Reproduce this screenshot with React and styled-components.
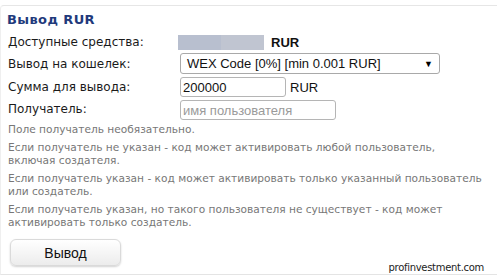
import React from "react";
import styled, { createGlobalStyle } from "styled-components";

const Global = createGlobalStyle`
  html, body { margin: 0; padding: 0; background: #fff; }
  body { font-family: "DejaVu Sans", Verdana, sans-serif; }
`;

const Panel = styled.section`
  position: relative;
  box-sizing: border-box;
  margin-top: 5px;
  width: 497px;
  height: 270px;
  border-top: 1px solid #e6e6e6;
  border-left: 1px solid #efefef;
  border-bottom: 1px solid #e4e4e4;
  border-top-left-radius: 4px;
  padding: 6px 0 0 6px;
`;

const Title = styled.h2`
  margin: 0;
  font: bold 13px/16px "DejaVu Sans", Verdana, sans-serif;
  letter-spacing: 0.4px;
  color: #1f3a7c;
`;

const Form = styled.div`
  display: grid;
  grid-template-columns: 172px 1fr;
  row-gap: 3px;
  margin-top: 6px;
  padding-left: 1px;
`;

const Label = styled.div`
  display: flex;
  align-items: center;
  font-size: 12px;
  color: #1a1a1a;
  height: ${(p) => p.h}px;
`;

const Field = styled.div`
  display: flex;
  align-items: center;
  gap: 4px;
  height: ${(p) => p.h}px;
  font: 13px "Liberation Sans", Arial, sans-serif;
  color: #111;
`;

const Hidden = styled.div`
  display: flex;
  width: 86px;
  height: 15px;
  margin-left: -2px;
  margin-right: 3px;
`;

const Blur = styled.span`
  flex: 1;
  background: ${(p) => p.c};
`;

const Strong = styled.b`
  font: bold 13px "Liberation Sans", Arial, sans-serif;
  color: #111;
`;

const Select = styled.div`
  box-sizing: border-box;
  width: 260px;
  height: 21px;
  border: 1px solid #a9a9a9;
  border-radius: 3px;
  display: flex;
  align-items: center;
  justify-content: space-between;
  padding: 0 6px 0 6px;
  font: 13px "Liberation Sans", Arial, sans-serif;
  color: #111;
`;

const Arrow = styled.span`
  font-size: 9px;
  color: #000;
`;

const Input = styled.input`
  box-sizing: border-box;
  width: ${(p) => p.w}px;
  height: 20px;
  border: 1px solid #b5b5b5;
  border-radius: 3px;
  padding: 0 2px;
  font: 13px "Liberation Sans", Arial, sans-serif;
  color: #111;
  outline: none;
  &::placeholder { color: #9a9a9a; }
`;

const Notes = styled.div`
  margin-top: 3px;
  padding-left: 1px;
  font-size: 10.6px;
  line-height: 13px;
  color: #777;
`;

const Note = styled.p`
  margin: 0 0 5px;
  white-space: nowrap;
  &:last-child { margin-bottom: 0; }
`;

const Button = styled.button`
  display: block;
  margin: 10px 0 0 3px;
  width: 111px;
  height: 27px;
  border: 1px solid #dadada;
  border-radius: 6px;
  background: linear-gradient(#ffffff, #ececec);
  box-shadow: 0 1px 2px rgba(0, 0, 0, 0.18);
  font: 14px "Liberation Sans", Arial, sans-serif;
  color: #111;
`;

const Watermark = styled.span`
  position: absolute;
  right: 13px;
  bottom: 1px;
  font-size: 10px;
  letter-spacing: -0.3px;
  color: #222;
`;

export default function App() {
  return (
    <>
      <Global />
      <Panel>
        <Title>Вывод RUR</Title>
        <Form>
          <Label h={16}>Доступные средства:</Label>
          <Field h={16}>
            <Hidden>
              <Blur c="#b8bfcf" />
              <Blur c="#c0c5d1" />
            </Hidden>
            <Strong>RUR</Strong>
          </Field>
          <Label h={21}>Вывод на кошелек:</Label>
          <Field h={21}>
            <Select>
              <span>WEX Code [0%] [min 0.001 RUR]</span>
              <Arrow>▼</Arrow>
            </Select>
          </Field>
          <Label h={20}>Сумма для вывода:</Label>
          <Field h={20}>
            <Input w={106} defaultValue="200000" />
            <span>RUR</span>
          </Field>
          <Label h={17}>Получатель:</Label>
          <Field h={20}>
            <Input w={156} placeholder="имя пользователя" />
          </Field>
        </Form>
        <Notes>
          <Note>Поле получатель необязательно.</Note>
          <Note>
            Если получатель не указан - код может активировать любой пользователь,
            <br />
            включая создателя.
          </Note>
          <Note>
            Если получатель указан - код может активировать только указанный пользователь
            <br />
            или создатель.
          </Note>
          <Note>
            Если получатель указан, но такого пользователя не существует - код может
            <br />
            активировать только создатель.
          </Note>
        </Notes>
        <Button>Вывод</Button>
        <Watermark>profinvestment.com</Watermark>
      </Panel>
    </>
  );
}
